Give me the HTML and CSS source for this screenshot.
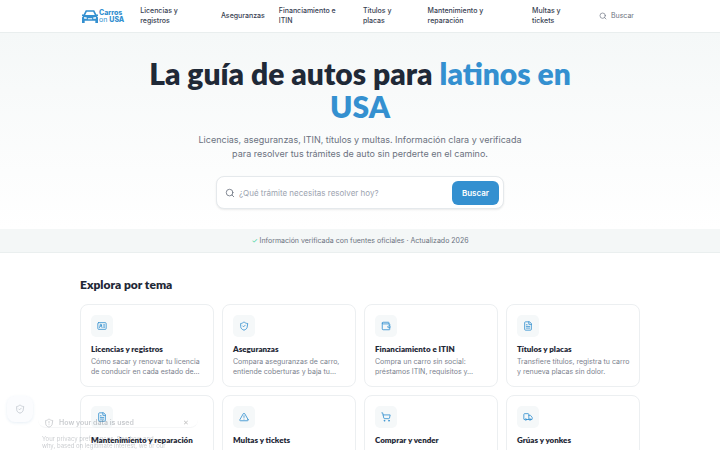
FILE: index.html
```html
<!DOCTYPE html>
<html lang="es">
<head>
	<meta charset="UTF-8">
	<meta name="viewport" content="width=device-width, initial-scale=1">
	<title>Carros on USA</title>
	<link rel="stylesheet" href="styles.css">
</head>
<body>
	<header class="header">
		<div class="container header-in">
			<a class="logo" href="#">
				<svg class="logo-car" viewBox="0 0 30 26"><path fill-rule="evenodd" d="M7 2h16l4 8h3v3h-2l2 3v10h-5v-4H5v4H0V16l2-3H0v-3h3zM9 5l-3 6h18l-3-6zM4 15v3h5v-2zM26 15l-5 1v2h5zM11 17v2h8v-2z"/></svg>
				<span class="logo-text"><b>Carros</b><span>on <b>USA</b></span></span>
			</a>
			<nav class="nav">
				<a href="#">Licencias y registros</a>
				<a href="#">Aseguranzas</a>
				<a href="#">Financiamiento e ITIN</a>
				<a href="#">Títulos y placas</a>
				<a href="#">Mantenimiento y reparación</a>
				<a href="#">Multas y tickets</a>
			</nav>
			<button class="nav-search" type="button">
				<svg class="ico" viewBox="0 0 24 24"><circle cx="11" cy="11" r="8"/><path d="m21 21-4.3-4.3"/></svg>
				Buscar
			</button>
		</div>
	</header>

	<main>
		<section class="hero">
			<h1>La guía de autos para <span>latinos en USA</span></h1>
			<p>Licencias, aseguranzas, ITIN, títulos y multas. Información clara y verificada para resolver tus trámites de auto sin perderte en el camino.</p>
			<form class="search">
				<svg class="ico" viewBox="0 0 24 24"><circle cx="11" cy="11" r="8"/><path d="m21 21-4.3-4.3"/></svg>
				<input type="text" aria-label="Buscar un trámite" placeholder="¿Qué trámite necesitas resolver hoy?">
				<button type="submit">Buscar</button>
			</form>
		</section>

		<div class="trust"><span>✓</span> Información verificada con fuentes oficiales · Actualizado 2026</div>

		<section class="container topics">
			<h2>Explora por tema</h2>
			<div class="grid">
				<a class="card" href="#">
					<span class="card-ico"><svg class="ico" viewBox="0 0 24 24"><rect x="2" y="4" width="20" height="16" rx="2"/><path d="M6 16v-1a3 3 0 0 1 6 0v1M16 9h2M16 12h2M16 15h2"/><circle cx="9" cy="10" r="2"/></svg></span>
					<h3>Licencias y registros</h3>
					<p>Cómo sacar y renovar tu licencia de conducir en cada estado de…</p>
				</a>
				<a class="card" href="#">
					<span class="card-ico"><svg class="ico" viewBox="0 0 24 24"><path d="M20 13c0 5-3.500 7.500-8 9-4.500-1.500-8-4-8-9V6c3 0 6-2 8-4 2 2 5 4 8 4z"/><path d="m9 12 2 2 4-4"/></svg></span>
					<h3>Aseguranzas</h3>
					<p>Compara aseguranzas de carro, entiende coberturas y baja tu…</p>
				</a>
				<a class="card" href="#">
					<span class="card-ico"><svg class="ico" viewBox="0 0 24 24"><path d="M19 7V4a1 1 0 0 0-1-1H5a2 2 0 0 0 0 4h15a1 1 0 0 1 1 1v4h-3a2 2 0 0 0 0 4h3a1 1 0 0 0 1-1v-2a1 1 0 0 0-1-1"/><path d="M3 5v14a2 2 0 0 0 2 2h15a1 1 0 0 0 1-1v-4"/></svg></span>
					<h3>Financiamiento e ITIN</h3>
					<p>Compra un carro sin social: préstamos ITIN, requisitos y…</p>
				</a>
				<a class="card" href="#">
					<span class="card-ico"><svg class="ico" viewBox="0 0 24 24"><path d="M15 2H6a2 2 0 0 0-2 2v16a2 2 0 0 0 2 2h12a2 2 0 0 0 2-2V7zM14 2v6h6M8 9h2M8 13h8M8 17h8"/></svg></span>
					<h3>Títulos y placas</h3>
					<p>Transfiere títulos, registra tu carro y renueva placas sin dolor.</p>
				</a>
				<a class="card" href="#">
					<span class="card-ico"><svg class="ico" viewBox="0 0 24 24"><path d="M15 2H6a2 2 0 0 0-2 2v16a2 2 0 0 0 2 2h12a2 2 0 0 0 2-2V7zM14 2v6h6M8 9h2M8 13h8M8 17h8"/></svg></span>
					<h3>Mantenimiento y reparación</h3>
				</a>
				<a class="card" href="#">
					<span class="card-ico"><svg class="ico" viewBox="0 0 24 24"><path d="m21.700 18-8-14a2 2 0 0 0-3.400 0l-8 14A2 2 0 0 0 4 21h16a2 2 0 0 0 1.700-3zM12 9v4M12 17h.01"/></svg></span>
					<h3>Multas y tickets</h3>
				</a>
				<a class="card" href="#">
					<span class="card-ico"><svg class="ico" viewBox="0 0 24 24"><circle cx="8" cy="21" r="1"/><circle cx="19" cy="21" r="1"/><path d="M2 2h2l2.700 12.400a2 2 0 0 0 2 1.600h9.700a2 2 0 0 0 2-1.600L22 7H5.100"/></svg></span>
					<h3>Comprar y vender</h3>
				</a>
				<a class="card" href="#">
					<span class="card-ico"><svg class="ico" viewBox="0 0 24 24"><path d="M14 18V6a2 2 0 0 0-2-2H4a2 2 0 0 0-2 2v11a1 1 0 0 0 1 1h2M9 18h6M19 18h2a1 1 0 0 0 1-1v-3.700a1 1 0 0 0-.2-.6L18.300 8.400a1 1 0 0 0-.8-.4H14"/><circle cx="7" cy="18" r="2"/><circle cx="17" cy="18" r="2"/></svg></span>
					<h3>Grúas y yonkes</h3>
				</a>
			</div>
		</section>
	</main>

	<!-- privacy widget, fading in -->
	<button class="privacy-btn" type="button" aria-label="Privacy">
		<svg class="ico" viewBox="0 0 24 24"><path d="M20 13c0 5-3.500 7.500-8 9-4.500-1.500-8-4-8-9V6c3 0 6-2 8-4 2 2 5 4 8 4z"/><path d="m9 12 2 2 4-4"/></svg>
	</button>
	<aside class="privacy">
		<div class="privacy-head">
			<svg class="ico" viewBox="0 0 24 24"><path d="M20 13c0 5-3.500 7.500-8 9-4.500-1.500-8-4-8-9V6c3 0 6-2 8-4 2 2 5 4 8 4z"/><path d="M12 8v4M12 16h.01"/></svg>
			<strong>How your data is used</strong>
			<button type="button" aria-label="Close">✕</button>
		</div>
		<p>Your privacy preferences. See how and<br>why, based on legitimate interest, we or our</p>
	</aside>
</body>
</html>
```

FILE: styles.css
```css
*{margin: 0;padding: 0;box-sizing: border-box;}
body{font-family: Inter, "Liberation Sans", sans-serif;font-size: 7px;line-height: 10px;color: #1f2937;background: #fff;height: 100vh;overflow: hidden;}
h1,h2,h3{font-family: Lato, sans-serif;font-weight: 800;}
a{color: inherit;text-decoration: none;}
button,input{font: inherit;border: 0;background: none;outline: none;}
.container{max-width: 576px;margin: 0 auto;padding: 0 8px;}
.ico{width: 10px;height: 10px;fill: none;stroke: currentColor;stroke-width: 2;stroke-linecap: round;stroke-linejoin: round;flex: none;}

.header{border-bottom: 1px solid #e9eeee;}
.header-in{display: flex;align-items: center;justify-content: space-between;gap: 16px;height: 32px;}
.logo{display: flex;align-items: center;gap: 1px;padding-left: 2px;color: #3490d0;flex: none;}
.logo-car{width: 16px;height: 14px;fill: currentColor;}
.logo-text{display: flex;flex-direction: column;font-size: 7px;line-height: 7px;}
.logo-text b{font-weight: 800;}
.nav{display: flex;align-items: center;gap: 14px;font-weight: 500;color: #374151;min-width: 0;}
.nav-search{display: flex;align-items: center;gap: 4px;padding: 4px 6px 4px 0;color: #6b7280;flex: none;}
.nav-search .ico{width: 8px;height: 8px;}

.hero{padding: 24px 16px 20px;text-align: center;background: linear-gradient(#f5f8f8, #fff);}
.hero h1{max-width: 448px;margin: 0 auto 10px;font-size: 30px;line-height: 33px;}
.hero h1 span{color: #3490d0;}
.hero p{max-width: 336px;margin: 0 auto 15px;font-size: 9px;line-height: 14px;color: #6b7280;}
.search{display: flex;align-items: center;gap: 4px;max-width: 288px;height: 33px;margin: 0 auto;padding: 0 4px 0 8px;border: 1px solid #e5e9ec;border-radius: 8px;background: #fff;box-shadow: 0 1px 2px rgba(0,0,0,.08);color: #6b7280;}
.search input{flex: 1;min-width: 0;font-size: 8px;color: #1f2937;}
.search input::placeholder{color: #9ca3af;}
.search button{height: 24px;padding: 0 10px;border-radius: 6px;background: #3490d0;color: #fff;font-size: 8px;font-weight: 600;}

.trust{padding: 7px 8px 6px;text-align: center;color: #6b7280;background: #f4f7f7;border-bottom: 1px solid #eaefef;}
.trust span{color: #34d399;}

.topics{padding-top: 24px;}
.topics h2{margin-bottom: 11px;font-size: 12px;line-height: 16px;}
.grid{display: grid;grid-template-columns: repeat(4, 1fr);gap: 8px;}
.card{padding: 10px 8px 9px 10px;border: 1px solid #eceff1;border-radius: 8px;background: #fff;min-width: 0;min-height: 83px;}
.card-ico{display: flex;align-items: center;justify-content: center;width: 22px;height: 22px;margin-bottom: 6px;border-radius: 5px;background: #f5f8f9;color: #3490d0;}
.card h3{font-size: 8px;line-height: 12px;}
.card p{margin-top: 2px;color: #7b828e;}

.privacy-btn{position: fixed;left: 7px;bottom: 28px;display: flex;align-items: center;justify-content: center;width: 26px;height: 26px;border-radius: 8px;background: #fbfcfe;box-shadow: 0 1px 3px rgba(60,120,180,.12);color: #c3c9d0;}
.privacy{position: fixed;left: 38px;bottom: 0;width: 160px;height: 34px;opacity: .25;}
.privacy-head{display: flex;align-items: center;gap: 5px;height: 10px;padding: 0 9px 0 6px;margin: 2px 0 7px;border-bottom: 1px solid #d5d9dd;border-radius: 0 0 8px 8px;}
.privacy-head strong{flex: 1;font-weight: 600;}
.privacy p{padding-left: 4px;font-size: 6px;line-height: 7px;}
```
